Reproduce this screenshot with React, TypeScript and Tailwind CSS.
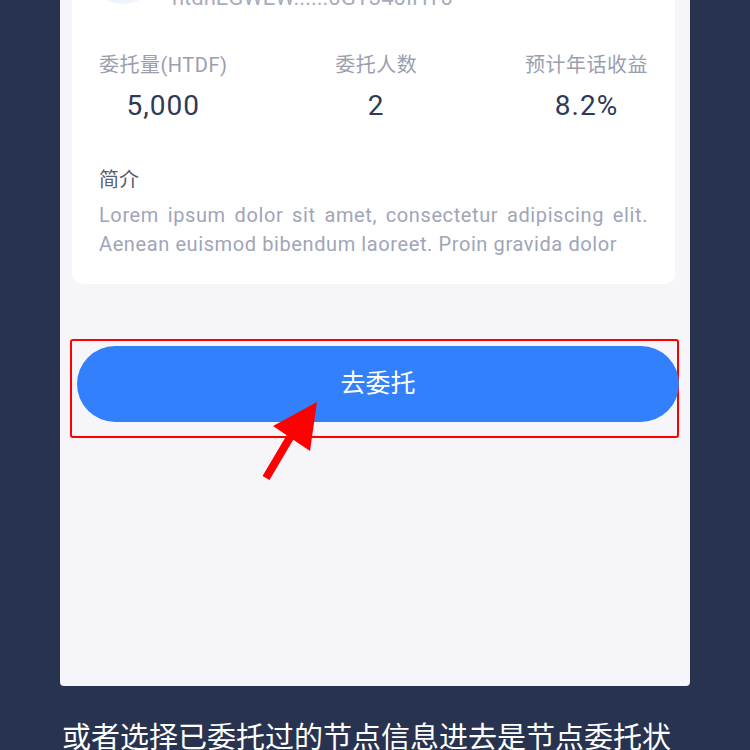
import React from 'react'

const stats = [
  { label: '委托量(HTDF)', value: '5,000' },
  { label: '委托人数', value: '2' },
  { label: '预计年话收益', value: '8.2%' },
]

export default function App() {
  return (
    <div
      className="relative w-[750px] h-[750px] overflow-hidden bg-[#283350]"
      style={{ fontFamily: 'Roboto, "Noto Sans CJK SC", sans-serif' }}
    >
      <div className="ml-[60px] w-[630px] h-[686px] flex flex-col bg-[#f5f5fa] rounded-b-[4px]">
        {/* node card */}
        <div className="ml-[12px] w-[603px] -mt-[100px] pt-[32px] pb-[25px] px-[27px] bg-white rounded-[10px]">
          <div className="flex items-end gap-[13px] -ml-[12px]">
            <div className="w-[72px] h-[72px] rounded-full bg-[#eef3fc] shrink-0" />
            <div className="-mb-[6px] text-[22px] leading-[24px] text-[#a8acbb]">htdhEGWEW......0GT340IHT0</div>
          </div>

          <div className="mt-[48px] flex justify-between">
            {stats.map(s => (
              <div key={s.label} className="flex flex-col items-center">
                <div className="text-[20px] leading-[26px] tracking-[0.5px] text-[#9a9eae]">{s.label}</div>
                <div className="mt-[11px] text-[28px] leading-[34px] tracking-[1px] text-[#2f3a55]">{s.value}</div>
              </div>
            ))}
          </div>

          <div className="mt-[44px] text-[20px] leading-[26px] text-[#595e70]">简介</div>
          <p className="mt-[8px] text-[20px] leading-[29px] tracking-[0.6px] text-[#a0a5b8] text-justify">
            Lorem ipsum dolor sit amet, consectetur adipiscing elit. Aenean euismod bibendum laoreet. Proin gravida dolor
          </p>
        </div>

        {/* action */}
        <div className="mt-[55px] ml-[10px] w-[609px] h-[99px] shrink-0 border-2 border-[#ff0000] rounded-[3px] pt-[5px] pl-[5px]">
          <button className="w-[602px] h-[76px] rounded-full bg-[#3380fc] text-white text-[25px]">去委托</button>
        </div>
      </div>

      <div className="mt-[32px] ml-[62px] w-[625px] text-[29px] leading-[40px] text-white">
        或者选择已委托过的节点信息进去是节点委托状态
      </div>

      <svg className="absolute left-0 top-0 pointer-events-none" width="750" height="750" viewBox="0 0 750 750">
        <line x1="266" y1="478" x2="292" y2="434" stroke="#ff0000" strokeWidth="8" />
        <polygon points="317,402 273,426 310,451" fill="#ff0000" />
      </svg>
    </div>
  )
}
